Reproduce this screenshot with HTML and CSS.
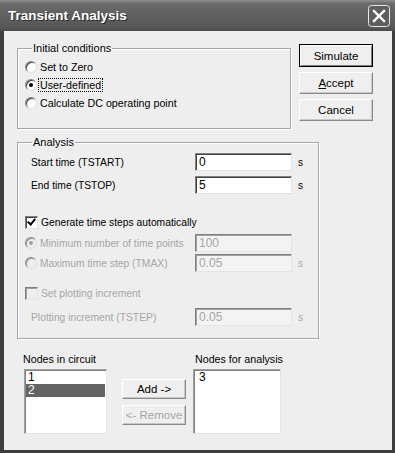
FILE: index.html
```html
<!DOCTYPE html>
<html lang="en">
<head>
  <meta charset="UTF-8">
  <title>Transient Analysis</title>
  <link rel="stylesheet" href="styles.css">
</head>
<body>
  <div class="window">
    <div class="titlebar">
      <span class="title">Transient Analysis</span>
      <span class="close">
        <svg width="22" height="22" viewBox="0 0 22 22">
          <rect x="0.5" y="0.5" width="21" height="21" rx="3" fill="#5e5e5e" stroke="#e8e8e8"/>
          <path d="M6 6 L16 16 M16 6 L6 16" stroke="#fff" stroke-width="2.4" stroke-linecap="square"/>
        </svg>
      </span>
    </div>
    <div class="client">
      <div class="top-row">
        <fieldset class="group initial">
          <legend>Initial conditions</legend>
          <div class="opt"><span class="radio"></span><span>Set to Zero</span></div>
          <div class="opt"><span class="radio on"></span><span class="focus">User-defined</span></div>
          <div class="opt"><span class="radio"></span><span>Calculate DC operating point</span></div>
        </fieldset>
        <div class="actions">
          <button class="btn default">Simulate</button>
          <button class="btn"><u>A</u>ccept</button>
          <button class="btn">Cancel</button>
        </div>
      </div>

      <fieldset class="group analysis">
        <legend>Analysis</legend>
        <div class="field">
          <span class="label">Start time (TSTART)</span>
          <span class="edit">0</span>
          <span class="unit">s</span>
        </div>
        <div class="field second">
          <span class="label">End time (TSTOP)</span>
          <span class="edit">5</span>
          <span class="unit">s</span>
        </div>
        <div class="opt check-row"><span class="check on"></span><span>Generate time steps automatically</span></div>
        <div class="field sub disabled">
          <span class="label wide"><span class="radio on"></span><span>Minimum number of time points</span></span>
          <span class="edit">100</span>
        </div>
        <div class="field sub tight disabled">
          <span class="label wide"><span class="radio"></span><span>Maximum time step (TMAX)</span></span>
          <span class="edit">0.05</span>
          <span class="unit">s</span>
        </div>
        <div class="opt check-row plot disabled"><span class="check"></span><span>Set plotting increment</span></div>
        <div class="field plot-step disabled">
          <span class="label">Plotting increment (TSTEP)</span>
          <span class="edit">0.05</span>
          <span class="unit">s</span>
        </div>
      </fieldset>

      <div class="nodes">
        <div class="node-col left">
          <div class="caption">Nodes in circuit</div>
          <div class="listbox small">
            <div class="item">1</div>
            <div class="item selected">2</div>
          </div>
        </div>
        <div class="move">
          <button class="btn small-btn">Add -&gt;</button>
          <button class="btn small-btn remove" disabled>&lt;- Remove</button>
        </div>
        <div class="node-col">
          <div class="caption">Nodes for analysis</div>
          <div class="listbox wide-list">
            <div class="item">3</div>
          </div>
        </div>
      </div>
    </div>
  </div>
</body>
</html>
```

FILE: styles.css
```css
html, body {
  margin: 0;
  padding: 0;
}
body {
  font-family: "Liberation Sans", Arial, sans-serif;
  font-size: 10.3px;
  color: #000;
}
.window {
  width: 395px;
  height: 453px;
  box-sizing: border-box;
  background: #3e3e3e;
  display: flex;
  flex-direction: column;
}
.titlebar {
  height: 31px;
  box-sizing: border-box;
  display: flex;
  align-items: center;
  justify-content: space-between;
  padding: 0 5px 0 8px;
  background: linear-gradient(#8e8e8e, #6a6a6a 12%, #606060 50%, #575757 90%, #4a4a4a);
}
.title {
  color: #fff;
  font-weight: bold;
  font-size: 13.5px;
  text-shadow: 1px 1px 0 #2a2a2a;
}
.close {
  display: flex;
}
.client {
  flex: 1;
  margin: 0 3px 3px 4px;
  background: #eeeeee;
  padding: 11px 0 0 13px;
}
.top-row {
  display: flex;
  align-items: flex-start;
}
.group {
  margin: 0;
  padding: 0;
  min-width: 0;
  border: 1px solid #a6a6a6;
  box-shadow: 1px 1px 0 #fff, inset 1px 1px 0 #fff;
  box-sizing: border-box;
}
.group legend {
  padding: 0 1px;
  margin-left: 7px;
  line-height: 13px;
  font-size: 11px;
}
.initial {
  width: 274px;
  padding: 3px 0 16px 7px;
  font-size: 10.7px;
}
.opt {
  display: flex;
  align-items: center;
  height: 18px;
  gap: 3px;
}
.radio {
  width: 12px;
  height: 12px;
  box-sizing: border-box;
  border-radius: 50%;
  background: #fff;
  border: 1px solid;
  border-color: #8a8a8a #e0e0e0 #e0e0e0 #8a8a8a;
  box-shadow: inset 1px 1px 0 #404040;
  display: inline-flex;
  align-items: center;
  justify-content: center;
  flex: none;
}
.radio.on::after {
  content: "";
  width: 4px;
  height: 4px;
  border-radius: 50%;
  background: #000;
}
.focus {
  outline: 1px dotted #000;
  outline-offset: 0;
  padding: 0 1px;
  margin-left: -1px;
}
.actions {
  display: flex;
  flex-direction: column;
  gap: 5px;
  margin: 2px 0 0 8px;
}
.btn {
  font-family: inherit;
  font-size: 11.5px;
  color: #000;
  width: 74px;
  height: 22px;
  padding: 0;
  background: #efefef;
  border: 1px solid;
  border-color: #fff #8a8a8a #8a8a8a #fff;
  box-shadow: inset -1px -1px 0 #c8c8c8;
}
.btn.default {
  height: 23px;
  border: 1px solid #000;
  box-shadow: inset 1px 1px 0 #fff, inset -1px -1px 0 #808080;
}
.analysis {
  width: 302px;
  margin-top: 7px;
  padding: 4px 0 12px 7px;
}
.field {
  display: flex;
  align-items: center;
  height: 18px;
}
.field.second {
  margin-top: 5px;
}
.field .label {
  width: 164px;
  padding-left: 6px;
  flex: none;
}
.field .label.wide {
  width: 170px;
  padding-left: 0;
  display: flex;
  align-items: center;
  gap: 3px;
}
.edit {
  width: 97px;
  height: 18px;
  box-sizing: border-box;
  background: #fff;
  border: 1px solid;
  border-color: #808080 #e4e4e4 #e4e4e4 #808080;
  box-shadow: inset 1px 1px 0 #404040;
  padding: 2px 0 0 3px;
  line-height: 13px;
  font-size: 12px;
}
.unit {
  margin-left: 6px;
  font-size: 10px;
}
.check-row {
  height: 13px;
  margin-top: 22px;
}
.check {
  width: 13px;
  height: 13px;
  box-sizing: border-box;
  background: #fff;
  border: 1px solid;
  border-color: #808080 #e4e4e4 #e4e4e4 #808080;
  box-shadow: inset 1px 1px 0 #404040;
  position: relative;
  flex: none;
}
.check.on::after {
  content: "";
  position: absolute;
  left: 3px;
  top: 0px;
  width: 3px;
  height: 6px;
  border: solid #000;
  border-width: 0 2px 2px 0;
  transform: rotate(40deg);
}
.field.sub {
  margin-top: 5px;
}
.field.tight {
  margin-top: 2px;
}
.check-row.plot {
  margin-top: 15px;
}
.field.plot-step {
  margin-top: 8px;
}
.disabled {
  color: #a6a6a6;
}
.disabled .edit {
  background: #f3f3f3;
  color: #a6a6a6;
  box-shadow: inset 1px 1px 0 #a0a0a0;
}
.disabled .radio, .disabled .check {
  background: #eeeeee;
  box-shadow: inset 1px 1px 0 #a0a0a0;
}
.disabled .radio.on::after {
  background: #a0a0a0;
}
.nodes {
  display: flex;
  align-items: flex-start;
  margin-top: 14px;
  font-size: 10.7px;
}
.node-col.left {
  margin-left: 6px;
}
.caption {
  line-height: 13px;
  margin-bottom: 3px;
}
.listbox {
  height: 65px;
  box-sizing: border-box;
  background: #fff;
  border: 1px solid;
  border-color: #a0a0a0 #e4e4e4 #e4e4e4 #a0a0a0;
  box-shadow: inset 1px 1px 0 #808080;
  padding: 1px 1px 0 1px;
  margin-left: 1px;
  font-size: 12px;
}
.listbox.small {
  width: 83px;
}
.listbox.wide-list {
  width: 88px;
  margin-left: -2px;
  padding-left: 3px;
}
.item {
  height: 13px;
  line-height: 13px;
  padding-left: 2px;
}
.item.selected {
  background: #646464;
  color: #fff;
}
.move {
  display: flex;
  flex-direction: column;
  gap: 6px;
  margin: 26px 9px 0 15px;
}
.small-btn {
  width: 64px;
  height: 20px;
}
.remove {
  color: #a6a6a6;
}
```
